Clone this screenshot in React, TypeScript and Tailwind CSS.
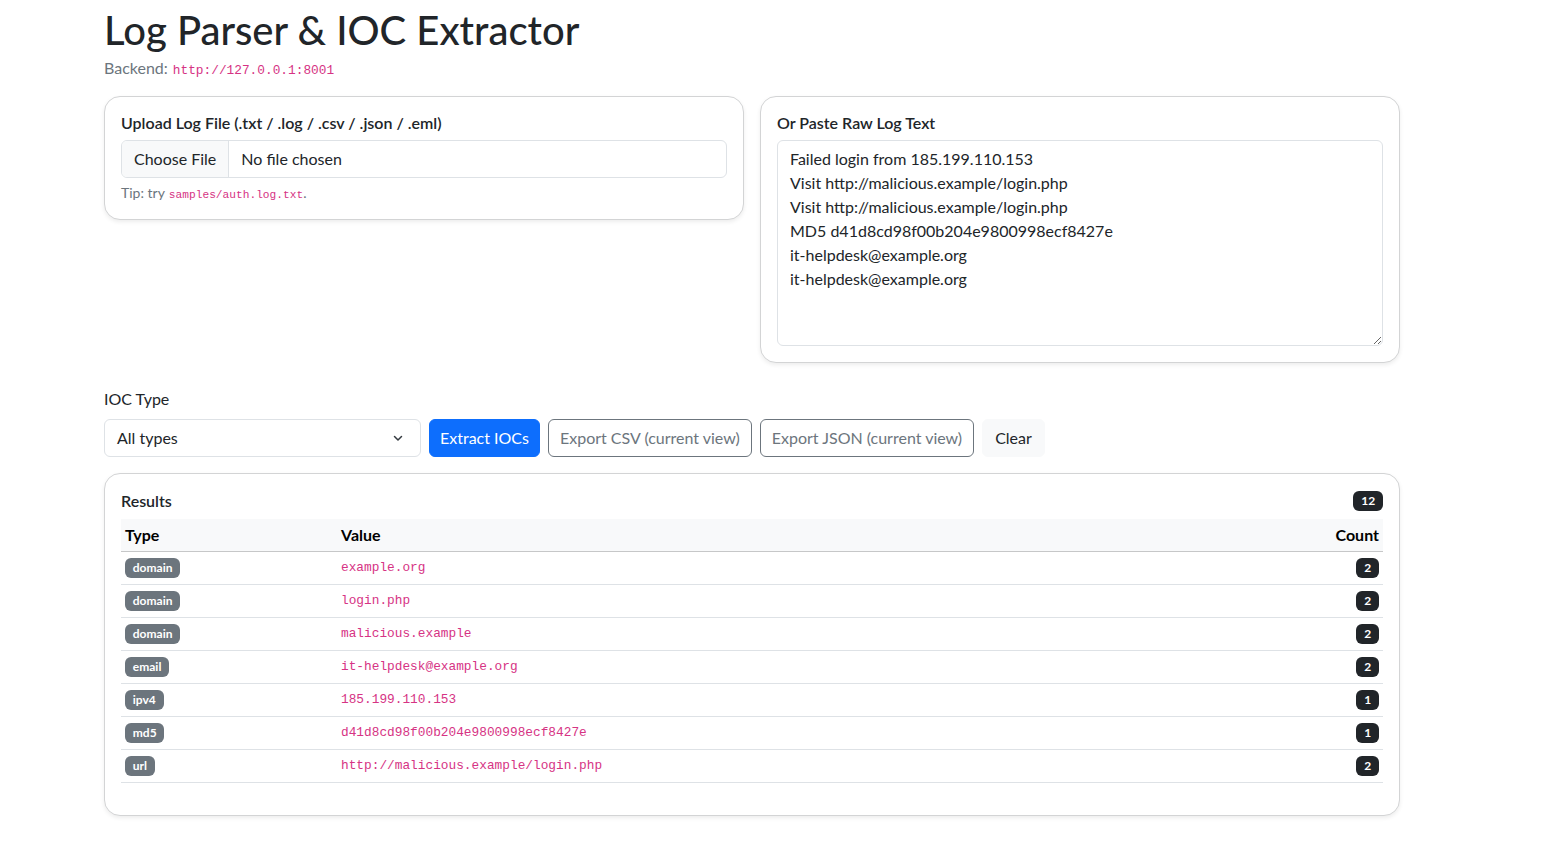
import React from 'react'

const FONT = { fontFamily: 'Lato, "Noto Sans", sans-serif' }

type Ioc = { type: string; value: string; count: number }

const results: Ioc[] = [
  { type: 'domain', value: 'example.org', count: 2 },
  { type: 'domain', value: 'login.php', count: 2 },
  { type: 'domain', value: 'malicious.example', count: 2 },
  { type: 'email', value: 'it-helpdesk@example.org', count: 2 },
  { type: 'ipv4', value: '185.199.110.153', count: 1 },
  { type: 'md5', value: 'd41d8cd98f00b204e9800998ecf8427e', count: 1 },
  { type: 'url', value: 'http://malicious.example/login.php', count: 2 },
]

const rawLog = `Failed login from 185.199.110.153
Visit http://malicious.example/login.php
Visit http://malicious.example/login.php
MD5 d41d8cd98f00b204e9800998ecf8427e
it-helpdesk@example.org
it-helpdesk@example.org`

function Code({ children, small }: { children: React.ReactNode; small?: boolean }) {
  return (
    <code
      className={`font-['Liberation_Mono',monospace] leading-none text-[#d63384] ${small ? 'text-[11.2px]' : 'text-[12.8px]'}`}
    >
      {children}
    </code>
  )
}

function Badge({ children, dark }: { children: React.ReactNode; dark?: boolean }) {
  return (
    <span
      className={`inline-block rounded-[6px] px-[7.8px] py-[4.2px] text-[12px] font-bold leading-none text-white ${
        dark ? 'bg-[#212529]' : 'bg-[#6c757d]'
      }`}
    >
      {children}
    </span>
  )
}

function Card({ children, className = '' }: { children: React.ReactNode; className?: string }) {
  return (
    <div className={`rounded-2xl border border-[#d3d4d5] bg-white p-4 shadow-[0_2px_4px_rgba(0,0,0,0.075)] ${className}`}>
      {children}
    </div>
  )
}

function ChevronDown() {
  return (
    <svg width={16} height={16} viewBox="0 0 16 16" fill="none" stroke="#343a40" strokeWidth={1.5} strokeLinecap="round" strokeLinejoin="round">
      <path d="M4.5 6.5L8 10l3.5-3.5" />
    </svg>
  )
}

export default function App() {
  return (
    <div className="min-h-screen bg-white text-[16px] leading-6 text-[#212529]" style={FONT}>
      <div className="ml-[104px] w-[1296px] pt-[6px]">
        {/* Header */}
        <h1 className="h-12 text-[40px] font-medium leading-[48px]">Log Parser &amp; IOC Extractor</h1>
        <p className="mt-[2px] flex h-6 items-baseline gap-[5px] text-[#6c757d]">
          Backend: <Code>http://127.0.0.1:8001</Code>
        </p>

        {/* Inputs */}
        <div className="mt-4 grid grid-cols-2 items-start gap-4">
          <Card>
            <h6 className="mb-2 text-[16px] font-semibold leading-[1.2]">Upload Log File (.txt / .log / .csv / .json / .eml)</h6>
            <div className="flex h-[38px] overflow-hidden rounded-[6px] border border-[#dee2e6]">
              <div className="flex items-center border-r border-[#dee2e6] bg-[#f8f9fa] px-3">Choose File</div>
              <div className="flex items-center px-3">No file chosen</div>
            </div>
            <div className="mt-1 flex h-[21px] items-baseline gap-[4px] text-[14px] leading-[21px] text-[#6c757d]">
              Tip: try
              <span>
                <Code small>samples/auth.log.txt</Code>.
              </span>
            </div>
          </Card>
          <Card>
            <h6 className="mb-2 text-[16px] font-semibold leading-[1.2]">Or Paste Raw Log Text</h6>
            <textarea
              rows={8}
              defaultValue={rawLog}
              className="block h-[206px] w-full resize-y rounded-[6px] border border-[#dee2e6] px-3 py-[6px] text-[16px] leading-6 text-[#212529] outline-none"
              style={FONT}
            />
          </Card>
        </div>

        {/* Controls */}
        <div className="mt-6">
          <label className="mb-2 block">IOC Type</label>
          <div className="flex items-center gap-2">
            <div className="flex h-[38px] w-[317px] items-center justify-between rounded-[6px] border border-[#dee2e6] pl-3 pr-[14px]">
              <span>All types</span>
              <ChevronDown />
            </div>
            <button className="h-[38px] rounded-[6px] border border-[#0d6efd] bg-[#0d6efd] px-[10px] text-white">Extract IOCs</button>
            <button className="h-[38px] rounded-[6px] border border-[#6c757d] px-[11px] text-[#6c757d]">Export CSV (current view)</button>
            <button className="h-[38px] rounded-[6px] border border-[#6c757d] px-[11px] text-[#6c757d]">Export JSON (current view)</button>
            <button className="h-[38px] rounded-[6px] border border-[#f8f9fa] bg-[#f8f9fa] px-3 font-normal text-[#212529]">Clear</button>
          </div>
        </div>

        {/* Results */}
        <Card className="mt-4">
          <div className="mb-2 flex h-[21px] items-center justify-between">
            <h6 className="text-[16px] font-semibold leading-[1.2]">Results</h6>
            <Badge dark>12</Badge>
          </div>
          <table className="mb-4 w-full border-collapse">
            <thead>
              <tr className="border-b border-[#c6c7c8] bg-[#f8f9fa] text-black">
                <th className="w-[216px] p-1 text-left font-bold">Type</th>
                <th className="p-1 text-left font-bold">Value</th>
                <th className="p-1 text-right font-bold">Count</th>
              </tr>
            </thead>
            <tbody>
              {results.map(r => (
                <tr key={r.value} className="border-b border-[#dee2e6]">
                  <td className="p-1">
                    <div className="flex h-6 items-center">
                      <Badge>{r.type}</Badge>
                    </div>
                  </td>
                  <td className="p-1">
                    <div className="flex h-6 items-center">
                      <Code>{r.value}</Code>
                    </div>
                  </td>
                  <td className="p-1">
                    <div className="flex h-6 items-center justify-end">
                      <Badge dark>{r.count}</Badge>
                    </div>
                  </td>
                </tr>
              ))}
            </tbody>
          </table>
        </Card>
      </div>
    </div>
  )
}
